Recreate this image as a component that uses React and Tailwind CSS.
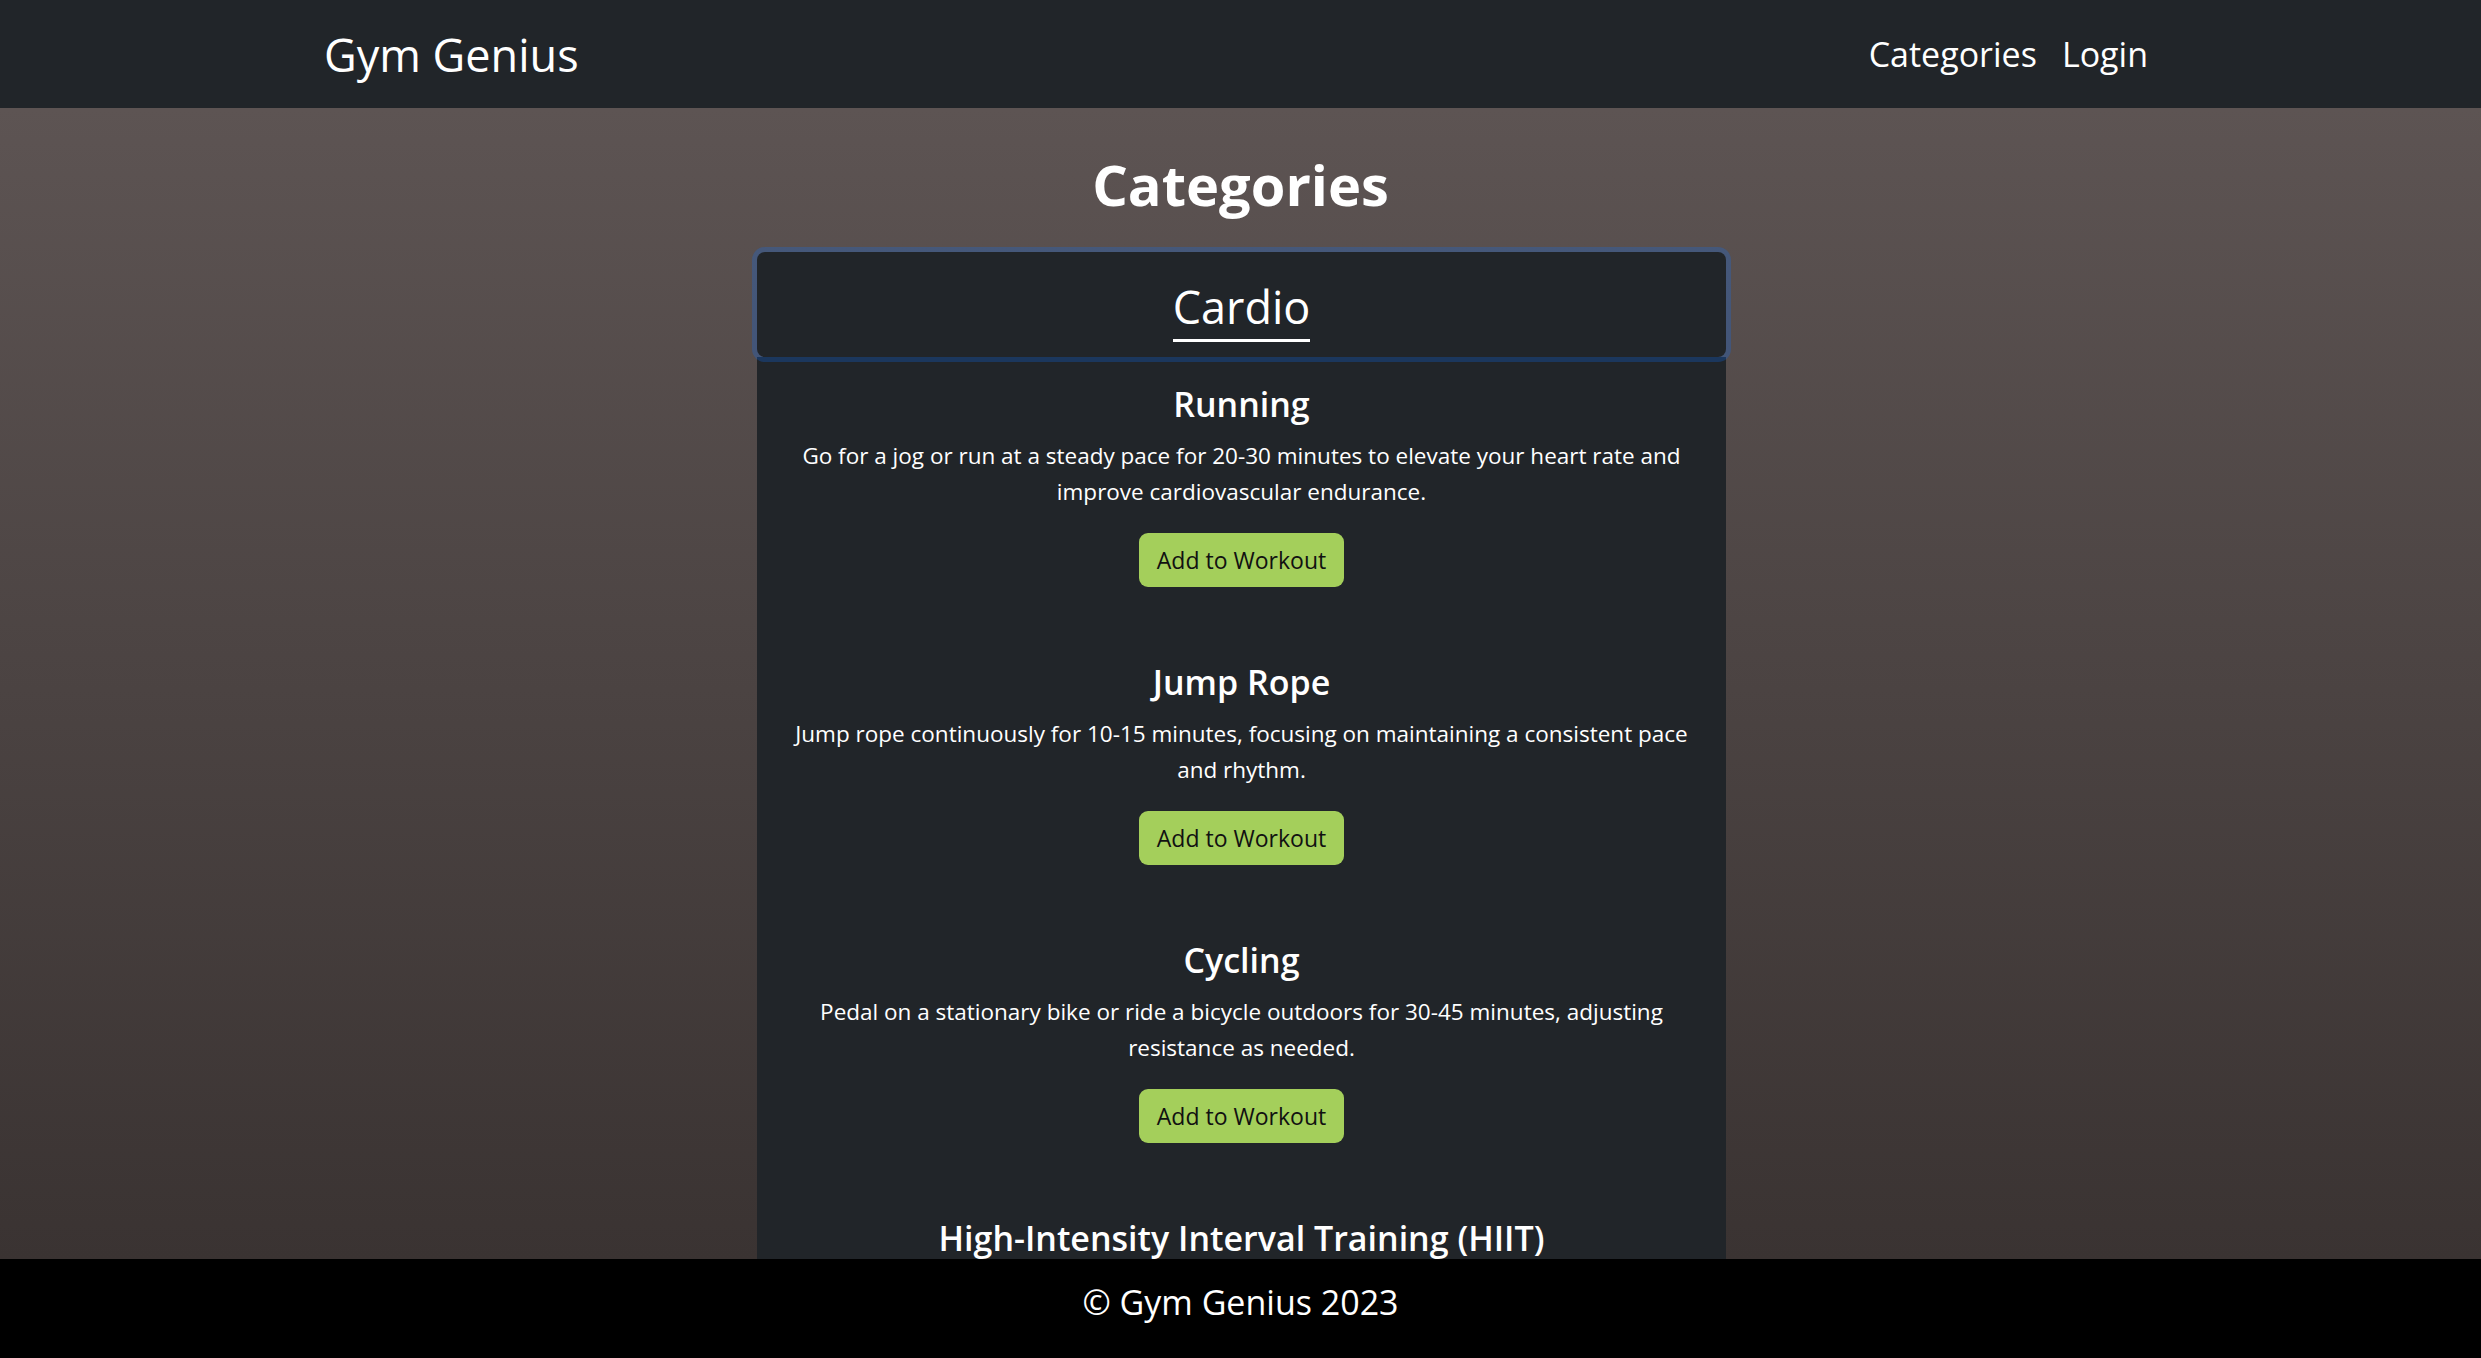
import React from 'react';

const exercises = [
  {
    name: 'Running',
    description:
      'Go for a jog or run at a steady pace for 20-30 minutes to elevate your heart rate and improve cardiovascular endurance.',
  },
  {
    name: 'Jump Rope',
    description:
      'Jump rope continuously for 10-15 minutes, focusing on maintaining a consistent pace and rhythm.',
  },
  {
    name: 'Cycling',
    description:
      'Pedal on a stationary bike or ride a bicycle outdoors for 30-45 minutes, adjusting resistance as needed.',
  },
  {
    name: 'High-Intensity Interval Training (HIIT)',
    description:
      'Alternate between short bursts of intense exercise and brief recovery periods for 15-20 minutes.',
  },
];

function Exercise({ name, description }) {
  return (
    <div className="flex flex-col items-center text-center px-[28px] pb-[74px]">
      <h3 className="text-[34px] leading-[43px] font-semibold mb-[12px]">{name}</h3>
      <p className="text-[22.5px] leading-[36px] mb-[23px]">{description}</p>
      <button className="h-[54px] px-[18px] rounded-[9px] bg-[#a4cf5b] text-[#111] text-[23px] leading-none hover:bg-[#93bd4c]">
        Add to Workout
      </button>
    </div>
  );
}

function App() {
  return (
    <div className="h-screen flex flex-col overflow-hidden font-['Open_Sans',sans-serif] text-white">
      {/* Navbar */}
      <nav className="h-[108px] shrink-0 bg-[#212529] flex items-center pl-[324px] pr-[333px]">
        <div className="w-full flex flex-row items-center justify-between">
          <a href="#" className="text-[45px] leading-none">Gym Genius</a>
          <div className="flex flex-row items-center gap-x-[25px] text-[34px] leading-none">
            <a href="#">Categories</a>
            <a href="#">Login</a>
          </div>
        </div>
      </nav>

      {/* Content */}
      <main className="flex-1 overflow-hidden bg-linear-to-b from-[#5d5453] to-[#3a3332]">
        <h1 className="mt-[40px] mb-[32px] text-center text-[56px] leading-[72px] font-bold">Categories</h1>

        <div className="w-[971px] mx-auto pl-[2px] flex flex-col">
          <div className="relative z-10 h-[105px] bg-[#212529] rounded-[8px] shadow-[0_0_0_5px_rgba(13,110,253,0.25)] flex items-start justify-center pt-[33px]">
            <span className="inline-block text-[45px] leading-[44px] pb-[10px] border-b-[3px] border-white">Cardio</span>
          </div>
          <div className="bg-[#212529] pt-[26px]">
            {exercises.map((ex) => (
              <Exercise key={ex.name} name={ex.name} description={ex.description} />
            ))}
          </div>
        </div>
      </main>

      {/* Footer */}
      <footer className="h-[99px] shrink-0 bg-black flex items-start justify-center pt-[16px] text-[34px] leading-[54px]">
        © Gym Genius 2023
      </footer>
    </div>
  );
}

export default App;
